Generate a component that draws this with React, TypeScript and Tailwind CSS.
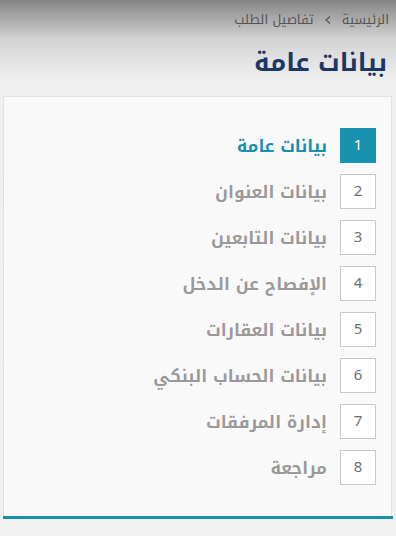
const steps = [
  "بيانات عامة",
  "بيانات العنوان",
  "بيانات التابعين",
  "الإفصاح عن الدخل",
  "بيانات العقارات",
  "بيانات الحساب البنكي",
  "إدارة المرفقات",
  "مراجعة",
];

const font = {
  fontFamily:
    '"Noto Kufi Arabic", "Noto Sans Arabic", "DejaVu Sans", "Noto Sans", sans-serif',
};

export default function App() {
  return (
    <div
      dir="rtl"
      style={font}
      className="flex h-[536px] w-[396px] flex-col overflow-hidden bg-[linear-gradient(to_bottom,#858585_0px,#d4d4d4_40px,#efefef_80px,#f1f1f1_100%)]"
    >
      <div className="flex items-center gap-[10px] pr-[7px] pt-[11px] text-[13px] leading-[18px] text-[#555]">
        <span>الرئيسية</span>
        <svg width="8" height="10" viewBox="0 0 8 10" className="text-[#555]">
          <polyline
            points="6,1.5 2,5 6,8.5"
            fill="none"
            stroke="currentColor"
            strokeWidth="1.3"
          />
        </svg>
        <span>تفاصيل الطلب</span>
      </div>
      <h1 className="mt-[17px] pr-[9px] text-[25px] font-bold leading-[34px] text-[#1b3766]">
        بيانات عامة
      </h1>
      <div className="mr-[4px] ml-[3px] mt-[16px] h-[420px] border border-b-0 border-[#e2e2e2] bg-[#faf9fa]">
        <div className="flex flex-col gap-[11px] pr-[15px] pt-[31px]">
          {steps.map((label, i) => {
            const active = i === 0;
            return (
              <div key={label} className="flex items-center gap-[13px]">
                <div
                  className={
                    active
                      ? "flex h-[35px] w-[36px] items-center justify-center border border-[#1993af] bg-[#1993af] text-[15px] text-white"
                      : "flex h-[35px] w-[36px] items-center justify-center border border-[#c9c9c9] bg-white text-[15px] text-[#6f6f6f]"
                  }
                >
                  {i + 1}
                </div>
                <span
                  className={
                    active
                      ? "text-[17px] font-bold leading-[26px] text-[#1a8fab]"
                      : "text-[17px] font-bold leading-[26px] text-[#9a9a9a]"
                  }
                >
                  {label}
                </span>
              </div>
            );
          })}
        </div>
      </div>
      <div className="mx-[3px] h-[3px] bg-[#1a8fab]" />
    </div>
  );
}
